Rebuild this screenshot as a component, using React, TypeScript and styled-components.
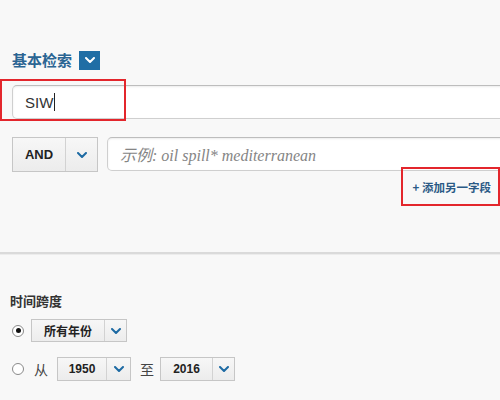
import styled, { createGlobalStyle } from "styled-components";

const GlobalStyle = createGlobalStyle`
  body {
    margin: 0;
    background: #f8f8f8;
    font-family: "Liberation Sans", "Noto Sans CJK SC", sans-serif;
  }
`;

const Chevron = ({ color = "#1d6aa3" }: { color?: string }) => (
  <svg width="10" height="6" viewBox="0 0 10 6">
    <polyline points="1,1 5,5 9,1" fill="none" stroke={color} strokeWidth="2" strokeLinecap="round" strokeLinejoin="round" />
  </svg>
);

const Select = ({
  label,
  labelWidth,
  arrowWidth,
  height,
  size = 12,
  ml = 0,
}: {
  label: string;
  labelWidth: number;
  arrowWidth: number;
  height: number;
  size?: number;
  ml?: number;
}) => (
  <SelectBox $height={height} $ml={ml}>
    <SelectLabel $width={labelWidth} $size={size}>{label}</SelectLabel>
    <SelectArrow $width={arrowWidth}>
      <Chevron />
    </SelectArrow>
  </SelectBox>
);

const App = () => {
  return (
    <Page>
      <GlobalStyle />
      <SearchSection>
        <TitleRow>
          <Title>基本检索</Title>
          <TitleToggle>
            <Chevron color="#ffffff" />
          </TitleToggle>
        </TitleRow>

        <FieldWrap>
          <TextField>
            SIW<Caret />
          </TextField>
          <Highlight />
        </FieldWrap>

        <QueryRow>
          <Select label="AND" labelWidth={52} arrowWidth={31} height={35} size={13} />
          <Placeholder>示例: oil spill* mediterranean</Placeholder>
        </QueryRow>

        <AddRow>
          <AddLink>+ 添加另一字段</AddLink>
        </AddRow>
      </SearchSection>

      <Divider />

      <TimeSection>
        <Heading>时间跨度</Heading>
        <RadioRow>
          <Radio $checked />
          <Select label="所有年份" labelWidth={72} arrowWidth={21} height={23} ml={7} />
        </RadioRow>
        <RadioRow>
          <Radio />
          <Word $ml={10}>从</Word>
          <Select label="1950" labelWidth={48} arrowWidth={23} height={24} ml={9} />
          <Word $ml={9}>至</Word>
          <Select label="2016" labelWidth={51} arrowWidth={21} height={24} ml={6} />
        </RadioRow>
      </TimeSection>
    </Page>
  );
};

export default App;

const Page = styled.div`
  width: 500px;
  height: 400px;
  overflow: hidden;
`;

const SearchSection = styled.div`
  padding: 50px 0 0 12px;
`;

const TitleRow = styled.div`
  display: flex;
  align-items: center;
  gap: 7px;
  height: 20px;
`;

const Title = styled.div`
  font-family: "Noto Sans CJK SC", sans-serif;
  font-size: 15px;
  font-weight: 700;
  color: #2b6593;
  line-height: 20px;
`;

const TitleToggle = styled.div`
  width: 21px;
  height: 19px;
  background: #1f6ea5;
  display: flex;
  align-items: center;
  justify-content: center;
`;

const FieldWrap = styled.div`
  position: relative;
  margin-top: 15px;
`;

const TextField = styled.div`
  box-sizing: border-box;
  height: 34px;
  margin-right: -12px;
  background: #fff;
  border: 1px solid #cfcfcf;
  border-top-color: #bdbdbd;
  border-radius: 5px;
  box-shadow: inset 0 1px 2px rgba(0, 0, 0, 0.08);
  padding-left: 12px;
  display: flex;
  align-items: center;
  font-size: 15px;
  color: #333;
`;

const Caret = styled.span`
  display: inline-block;
  width: 1px;
  height: 18px;
  background: #222;
  margin-left: 1px;
`;

const Highlight = styled.div`
  position: absolute;
  left: -12px;
  top: -6px;
  width: 126px;
  height: 42px;
  box-sizing: border-box;
  border: 2px solid #e3262c;
`;

const QueryRow = styled.div`
  display: flex;
  align-items: flex-start;
  gap: 9px;
  margin-top: 18px;
`;

const SelectBox = styled.div<{ $height: number; $ml: number }>`
  display: flex;
  height: ${(p) => p.$height}px;
  margin-left: ${(p) => p.$ml}px;
  box-sizing: border-box;
  border: 1px solid #c6c6c6;
  background: linear-gradient(#f7f7f7, #ececec);
`;

const SelectLabel = styled.div<{ $width: number; $size: number }>`
  width: ${(p) => p.$width}px;
  display: flex;
  align-items: center;
  justify-content: center;
  font-size: ${(p) => p.$size}px;
  font-weight: 700;
  color: #222;
  border-right: 1px solid #d2d2d2;
`;

const SelectArrow = styled.div<{ $width: number }>`
  width: ${(p) => p.$width}px;
  display: flex;
  align-items: center;
  justify-content: center;
`;

const Placeholder = styled.div`
  flex: 1;
  box-sizing: border-box;
  height: 34px;
  margin-right: -12px;
  background: #fff;
  border: 1px solid #cfcfcf;
  border-top-color: #bdbdbd;
  border-radius: 5px;
  box-shadow: inset 0 1px 2px rgba(0, 0, 0, 0.08);
  padding-left: 12px;
  display: flex;
  align-items: center;
  font-family: "Liberation Serif", "Noto Sans CJK SC", serif;
  font-style: italic;
  font-size: 16px;
  color: #858585;
`;

const AddRow = styled.div`
  display: flex;
  justify-content: flex-end;
  margin-top: -5px;
`;

const AddLink = styled.div`
  box-sizing: border-box;
  height: 39px;
  padding: 0 7px 0 10px;
  border: 2px solid #e3262c;
  display: flex;
  align-items: center;
  font-family: "Noto Sans CJK SC", sans-serif;
  font-size: 11.5px;
  font-weight: 700;
  color: #2b5a86;
`;

const Divider = styled.div`
  margin-top: 46px;
  height: 0;
  border-top: 2px solid #dadada;
  border-bottom: 1px solid #ececec;
`;

const TimeSection = styled.div`
  padding: 38px 0 0 10px;
`;

const Heading = styled.div`
  font-family: "Noto Sans CJK SC", sans-serif;
  font-size: 13px;
  font-weight: 700;
  color: #333;
  line-height: 16px;
`;

const RadioRow = styled.div`
  display: flex;
  align-items: center;
  margin-top: 10px;
  & + & {
    margin-top: 15px;
  }
`;

const Radio = styled.span<{ $checked?: boolean }>`
  box-sizing: border-box;
  width: 12px;
  height: 12px;
  margin-left: 2px;
  border-radius: 50%;
  border: 1px solid #8a8a8a;
  background: #fff;
  display: flex;
  align-items: center;
  justify-content: center;
  &::after {
    content: "";
    width: 5px;
    height: 5px;
    border-radius: 50%;
    background: ${(p) => (p.$checked ? "#111" : "transparent")};
  }
`;

const Word = styled.span<{ $ml: number }>`
  margin-left: ${(p) => p.$ml}px;
  font-family: "Noto Sans CJK SC", sans-serif;
  font-size: 14px;
  color: #444;
`;
